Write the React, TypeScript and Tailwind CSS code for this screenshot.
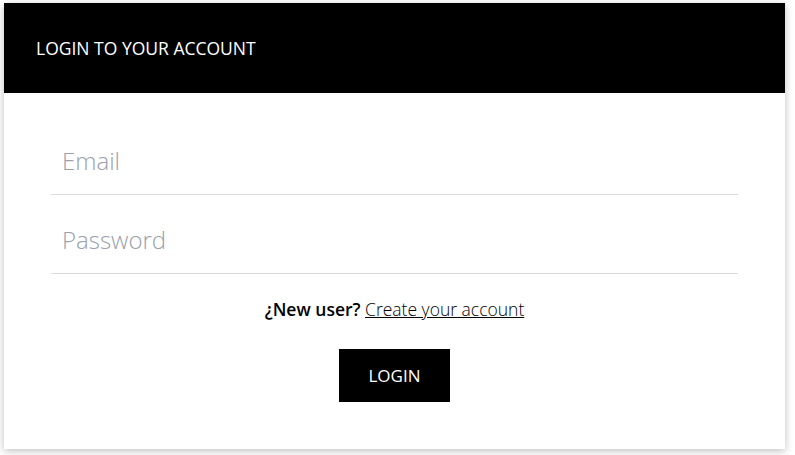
import React from "react";

const App = () => {
  return (
    <div className="min-h-screen bg-white pt-[3px] pl-[4px]" style={{ fontFamily: '"Open Sans", "Noto Sans", sans-serif' }}>
      <div className="w-[781px] h-[446px] bg-white shadow-[0_2px_8px_rgba(0,0,0,0.25)] flex flex-col">
        <div className="h-[90px] bg-black flex items-center px-[32px]">
          <h1 className="text-white text-[17.5px] font-normal">LOGIN TO YOUR ACCOUNT</h1>
        </div>

        <form className="px-[47px] pt-[23px] flex flex-col">
          <input
            type="email"
            placeholder="Email"
            className="h-[79px] pt-[10px] px-[11px] border-b border-[#dcdcdc] text-[24px] font-light outline-none placeholder:text-[#9aa0ad]"
          />
          <input
            type="password"
            placeholder="Password"
            className="h-[79px] pt-[10px] px-[11px] border-b border-[#dcdcdc] text-[24px] font-light outline-none placeholder:text-[#9aa0ad]"
          />

          <p className="mt-[22px] text-center text-[17.5px] text-black">
            <span className="font-semibold">¿New user?</span>{" "}
            <a href="#" className="font-light underline">Create your account</a>
          </p>

          <div className="mt-[27px] flex justify-center">
            <button type="button" className="w-[111px] h-[53px] bg-black text-white text-[17px] font-normal">
              LOGIN
            </button>
          </div>
        </form>
      </div>
    </div>
  );
};

export default App;
